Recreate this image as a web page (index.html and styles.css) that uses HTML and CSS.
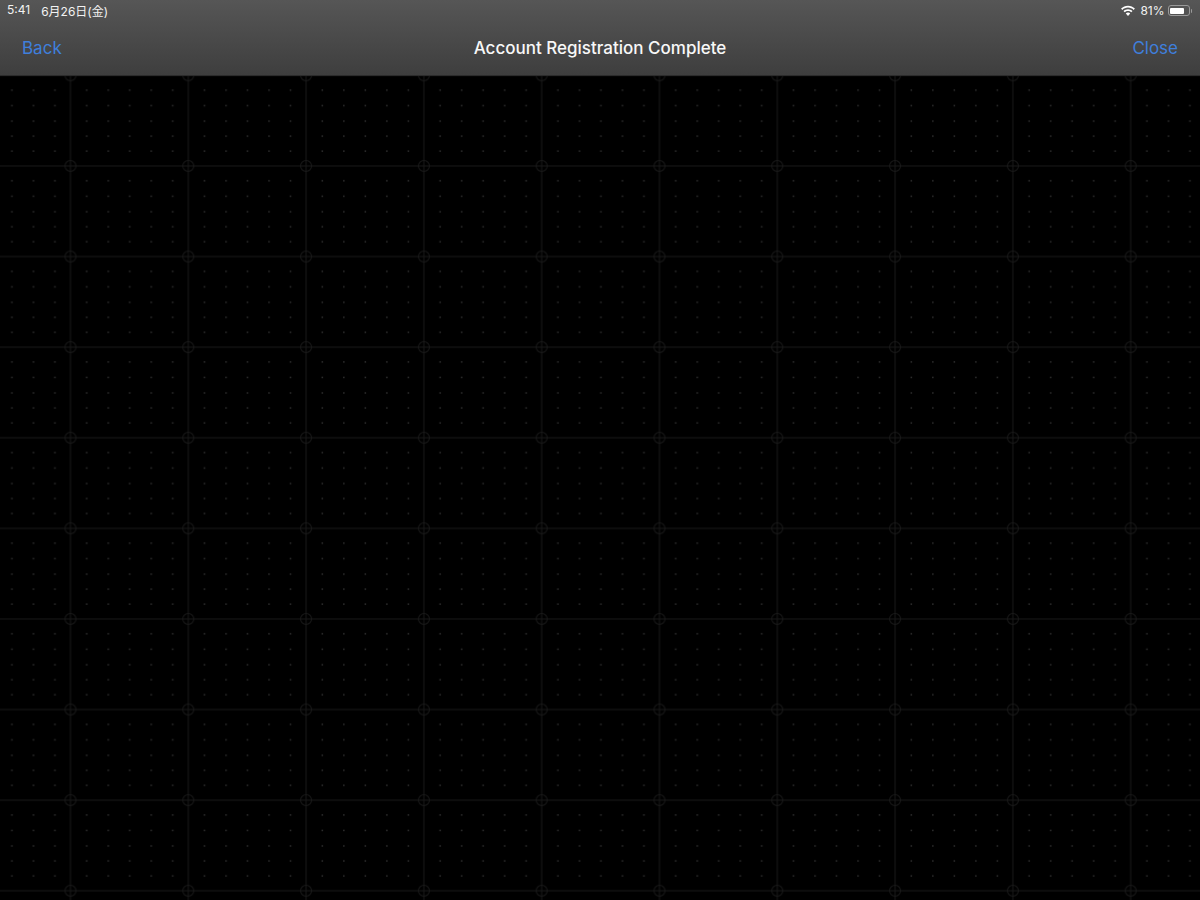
FILE: index.html
```html
<!DOCTYPE html>
<html lang="en">
<head>
    <meta charset="UTF-8">
    <meta name="viewport" content="width=device-width, initial-scale=1.0">
    <title>Account Registration Complete</title>
    <link rel="stylesheet" href="styles.css">
</head>
<body>
    <header class="top">
        <div class="status">
            <div class="status-left">
                <span>5:41</span>
                <span>6月26日(金)</span>
            </div>
            <div class="status-right">
                <svg class="wifi" width="16" height="12" viewBox="0 0 16 12">
                    <path d="M8 2.6c2.2 0 4.2.9 5.7 2.3l1.2-1.3C13.100 1.900 10.700.8 8 .8S2.900 1.900 1.100 3.600l1.200 1.300C3.800 3.500 5.800 2.600 8 2.600z"/>
                    <path d="M8 6c1.300 0 2.400.5 3.300 1.300l1.200-1.300C11.300 4.900 9.700 4.200 8 4.200S4.700 4.900 3.500 6l1.200 1.300C5.600 6.500 6.700 6 8 6z"/>
                    <path d="M8 7.600c-.9 0-1.600.3-2.200.9L8 10.900l2.200-2.400C9.600 7.900 8.900 7.600 8 7.600z"/>
                </svg>
                <span>81%</span>
                <div class="battery">
                    <div class="battery-fill"></div>
                </div>
                <div class="battery-nub"></div>
            </div>
        </div>
        <nav class="navbar">
            <a href="#" class="nav-left">Back</a>
            <h1>Account Registration Complete</h1>
            <a href="#" class="nav-right">Close</a>
        </nav>
    </header>
    <main class="canvas">
        <svg class="grid" width="1200" height="824">
            <defs>
                <pattern id="cell" x="60.5" y="80" width="117.8" height="90.6" patternUnits="userSpaceOnUse">
                    <path class="rule" d="M10 0V90.600M0 10H117.800"/>
                    <circle class="rule" cx="10" cy="10" r="5.500"/>
                    <g class="dots">
                        <rect x="25.500" y="24" width="1.500" height="1.500"/>
                        <rect x="47" y="24" width="1.500" height="1.500"/>
                        <rect x="68.500" y="24" width="1.500" height="1.500"/>
                        <rect x="90" y="24" width="1.500" height="1.500"/>
                        <rect x="111.500" y="24" width="1.500" height="1.500"/>
                        <rect x="25.500" y="39.500" width="1.500" height="1.500"/>
                        <rect x="47" y="39.500" width="1.500" height="1.500"/>
                        <rect x="68.500" y="39.500" width="1.500" height="1.500"/>
                        <rect x="90" y="39.500" width="1.500" height="1.500"/>
                        <rect x="111.500" y="39.500" width="1.500" height="1.500"/>
                        <rect x="25.500" y="55" width="1.500" height="1.500"/>
                        <rect x="47" y="55" width="1.500" height="1.500"/>
                        <rect x="68.500" y="55" width="1.500" height="1.500"/>
                        <rect x="90" y="55" width="1.500" height="1.500"/>
                        <rect x="111.500" y="55" width="1.500" height="1.500"/>
                        <rect x="25.500" y="70" width="1.500" height="1.500"/>
                        <rect x="47" y="70" width="1.500" height="1.500"/>
                        <rect x="68.500" y="70" width="1.500" height="1.500"/>
                        <rect x="90" y="70" width="1.500" height="1.500"/>
                        <rect x="111.500" y="70" width="1.500" height="1.500"/>
                        <rect x="25.500" y="85" width="1.500" height="1.500"/>
                        <rect x="47" y="85" width="1.500" height="1.500"/>
                        <rect x="68.500" y="85" width="1.500" height="1.500"/>
                        <rect x="90" y="85" width="1.500" height="1.500"/>
                        <rect x="111.500" y="85" width="1.500" height="1.500"/>
                    </g>
                </pattern>
            </defs>
            <rect width="1200" height="824" fill="url(#cell)"/>
        </svg>
    </main>
</body>
</html>
```

FILE: styles.css
```css
html, body {
    height: 100%;
}
body {
    margin: 0;
    display: flex;
    flex-direction: column;
    overflow: hidden;
    background-color: #000;
    color: #fff;
    font-family: "Inter", "Noto Sans CJK JP", sans-serif;
}
.top {
    height: 76px;
    flex: none;
    background: linear-gradient(#565656, #3e3e3e);
    border-bottom: 1px solid #2c2c2c;
    box-sizing: border-box;
}
.status {
    height: 21px;
    display: flex;
    justify-content: space-between;
    align-items: center;
    padding: 0 8px 0 7px;
    font-size: 12px;
    color: #f2f2f2;
}
.status-left {
    display: flex;
    gap: 11px;
}
.status-right {
    display: flex;
    align-items: center;
}
.wifi {
    margin-right: 4px;
    fill: #fff;
}
.battery {
    width: 22px;
    height: 11px;
    margin-left: 3px;
    padding: 1.5px;
    box-sizing: border-box;
    border: 1px solid #9a9a9a;
    border-radius: 3px;
}
.battery-fill {
    width: 81%;
    height: 100%;
    background-color: #fff;
    border-radius: 1px;
}
.battery-nub {
    width: 1.5px;
    height: 4px;
    margin-left: 1px;
    background-color: #9a9a9a;
    border-radius: 0 1px 1px 0;
}
.navbar {
    height: 54px;
    display: grid;
    grid-template-columns: 1fr auto 1fr;
    align-items: center;
    padding: 0 22px;
}
.navbar h1 {
    margin: 0;
    font-size: 17px;
    font-weight: 500;
    color: #f8f8f8;
}
.navbar a {
    font-size: 17px;
    color: #3f7fdc;
    text-decoration: none;
}
.nav-right {
    text-align: right;
}
.canvas {
    flex: 1;
    min-height: 0;
}
.grid {
    display: block;
}
.rule {
    fill: none;
    stroke: #191919;
    stroke-width: 1;
}
.dots {
    fill: #2e2e2e;
}
```
